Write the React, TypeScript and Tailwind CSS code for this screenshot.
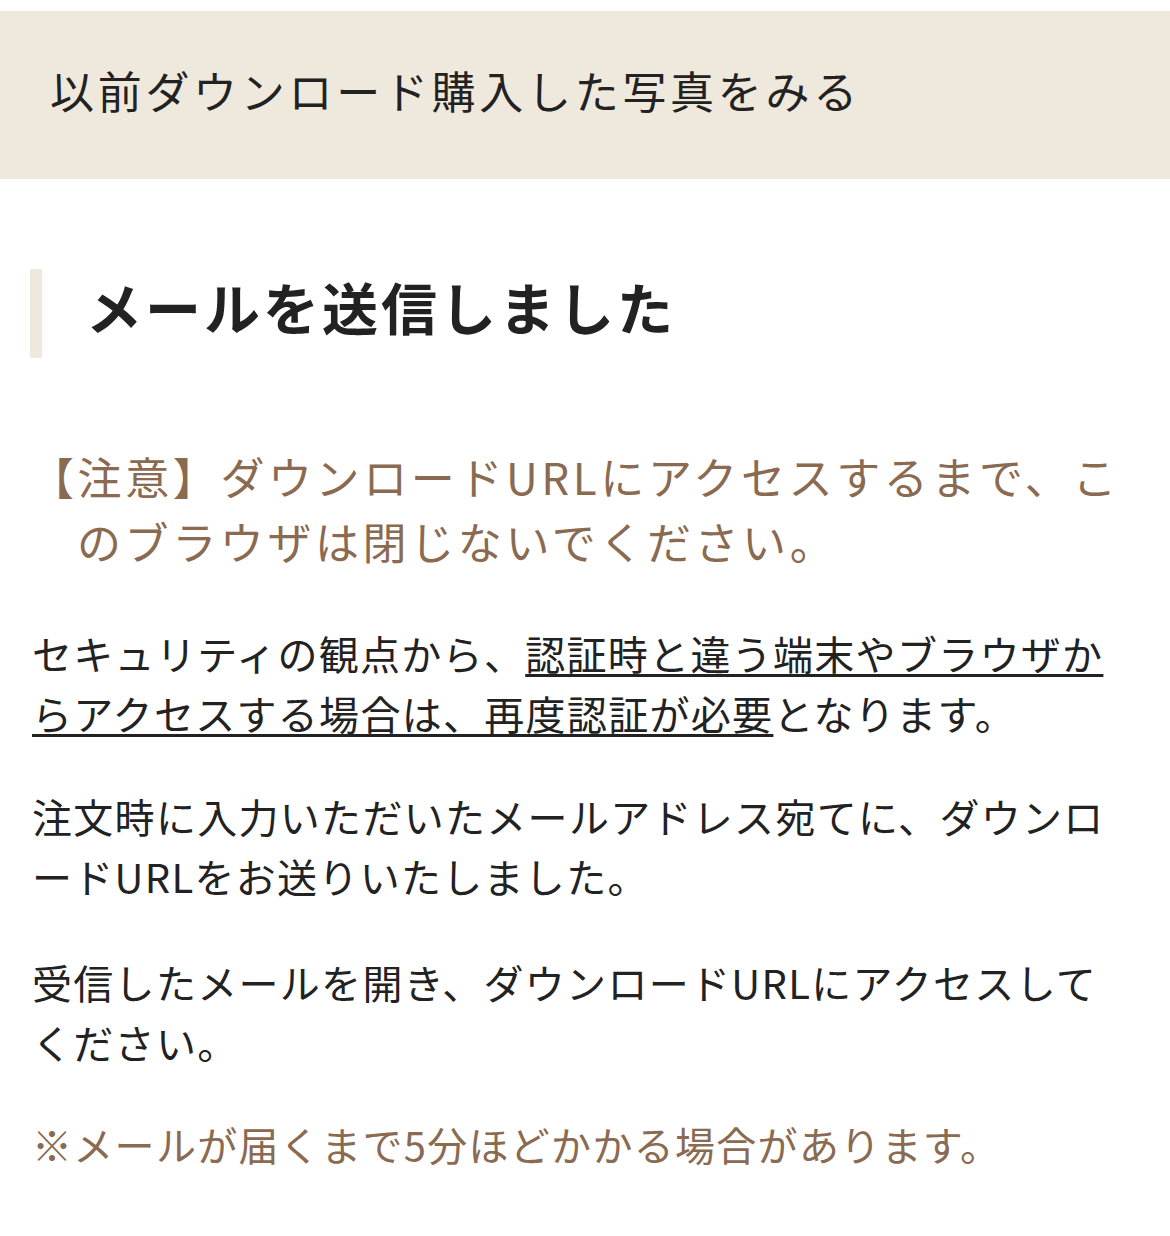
export default function App() {
  return (
    <div
      className="min-h-[1236px] w-full bg-white pt-[11px] text-[#222222]"
      style={{ fontFamily: '"Noto Sans CJK JP", "Noto Sans", sans-serif' }}
    >
      {/* 上部バナー */}
      <div className="flex h-[168px] items-center bg-[#efe9dd] pb-[10px] pl-[50px] text-[44px] tracking-[3.7px]">
        以前ダウンロード購入した写真をみる
      </div>

      {/* 見出し */}
      <div className="mx-[30px] mt-[90px] flex h-[89px] items-center border-l-[12px] border-[#efe9dd] pb-[16px] pl-[44px]">
        <h1 className="text-[56px] font-bold tracking-[3px]">メールを送信しました</h1>
      </div>

      <div className="mt-[86px] pl-[30px] pr-[20px]">
        <p className="pl-[47px] indent-[-47px] text-[44px] leading-[65px] tracking-[3.6px] text-[#8a6a50] whitespace-nowrap">
          【注意】ダウンロードURLにアクセスするまで、こ
          <br />
          のブラウザは閉じないでください。
        </p>
      </div>

      <div className="mt-[49px] pl-[32px] pr-[20px] text-[40px] leading-[60px] tracking-[1.3px] whitespace-nowrap">
        <p>
          セキュリティの観点から、
          <span className="underline decoration-[3px] underline-offset-[4px]">
            認証時と違う端末やブラウザか
            <br />
            らアクセスする場合は、再度認証が必要
          </span>
          となります。
        </p>

        <p className="mt-[43px]">
          注文時に入力いただいたメールアドレス宛てに、ダウンロ
          <br />
          ードURLをお送りいたしました。
        </p>

        <p className="mt-[46px]">
          受信したメールを開き、ダウンロードURLにアクセスして
          <br />
          ください。
        </p>

        <p className="mt-[42px] text-[#8a6a50]">※メールが届くまで5分ほどかかる場合があります。</p>
      </div>
    </div>
  )
}
